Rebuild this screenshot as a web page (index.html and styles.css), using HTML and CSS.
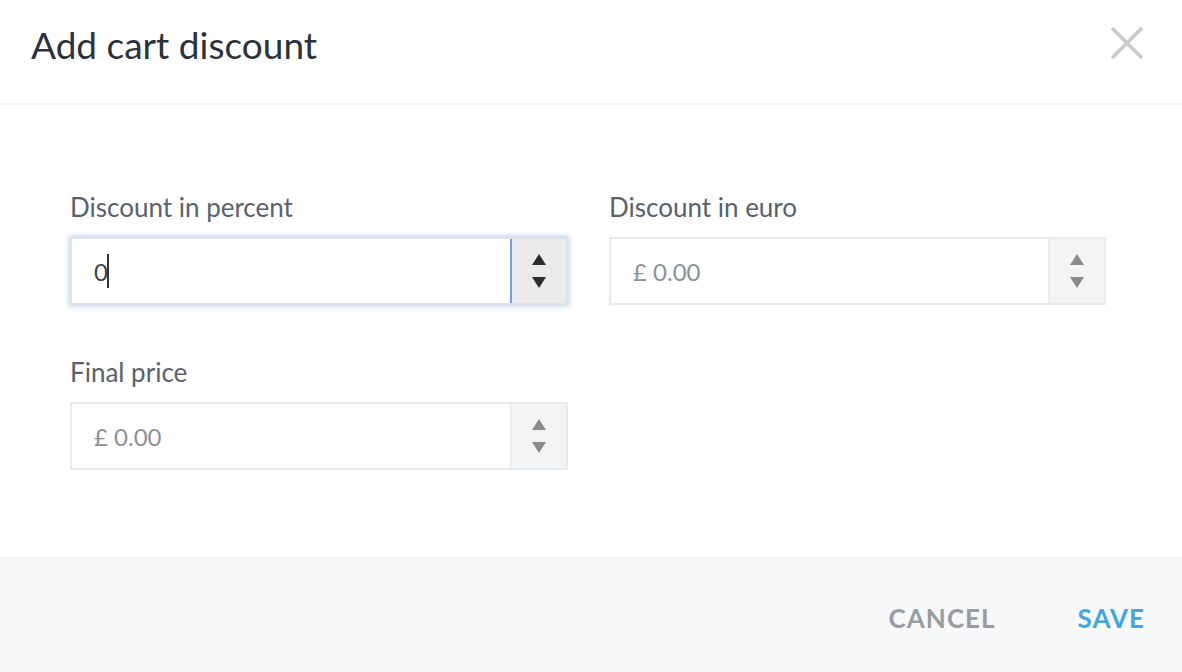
FILE: index.html
```html
<!doctype html>
<html lang="en">
<head>
  <meta charset="utf-8">
  <title>Add cart discount</title>
  <link rel="stylesheet" href="styles.css">
</head>
<body>
<div class="modal">
  <div class="modal-head">
    <h1 class="modal-title">Add cart discount</h1>
    <button class="close-btn" aria-label="Close">
      <svg width="34" height="34" viewBox="0 0 34 34">
        <path d="M2 2 L32 32 M32 2 L2 32" stroke="#c9c9c9" stroke-width="3.4" fill="none"/>
      </svg>
    </button>
  </div>

  <div class="modal-body">
    <div class="field">
      <label class="field-label">Discount in percent</label>
      <div class="num-input focused">
        <div class="num-value"><span class="typed">0</span><span class="caret"></span></div>
        <div class="spin">
          <span class="tri up"></span>
          <span class="tri down"></span>
        </div>
      </div>
    </div>

    <div class="field">
      <label class="field-label">Discount in euro</label>
      <div class="num-input">
        <div class="num-value placeholder">£ 0.00</div>
        <div class="spin">
          <span class="tri up"></span>
          <span class="tri down"></span>
        </div>
      </div>
    </div>

    <div class="field">
      <label class="field-label">Final price</label>
      <div class="num-input">
        <div class="num-value placeholder">£ 0.00</div>
        <div class="spin">
          <span class="tri up"></span>
          <span class="tri down"></span>
        </div>
      </div>
    </div>
  </div>

  <div class="modal-foot">
    <button class="foot-btn cancel">CANCEL</button>
    <button class="foot-btn save">SAVE</button>
  </div>
</div>
</body>
</html>
```

FILE: styles.css
```css
body {
  margin: 0;
  background-color: #fff;
  font-family: Lato, "Open Sans", sans-serif;
  color: #2f3640;
}

.modal {
  width: 1182px;
  height: 672px;
  display: flex;
  flex-direction: column;
}

.modal-head {
  height: 103px;
  border-bottom: 2px solid #eef0f2;
  display: flex;
  align-items: center;
  justify-content: space-between;
  padding: 0 38px 0 31px;
}

.modal-title {
  margin: 0;
  margin-top: -14px;
  font-size: 37px;
  font-weight: 400;
  color: #2b323b;
}

.close-btn {
  border: 0;
  background: none;
  padding: 0;
  margin-top: -17px;
  display: flex;
}

.modal-body {
  flex: 1;
  display: grid;
  grid-template-columns: 498px 497px;
  column-gap: 41px;
  row-gap: 51px;
  align-content: start;
  padding: 86px 0 0 70px;
}

.field-label {
  display: block;
  font-size: 26px;
  color: #59626b;
  margin-bottom: 14px;
}

.num-input {
  height: 64px;
  border: 2px solid #e8ebed;
  display: flex;
  background-color: #fff;
}

.num-input.focused {
  border-color: #dfe3e6;
  box-shadow: 0 0 5px 1px rgba(120, 170, 235, 0.55);
}

.num-value {
  flex: 1;
  display: flex;
  align-items: center;
  padding-left: 22px;
  font-size: 24px;
  color: #3b424a;
}

.num-value.placeholder {
  color: #8d9196;
}

.caret {
  display: inline-block;
  width: 2px;
  height: 34px;
  background-color: #333;
  margin-left: -1px;
}

.spin {
  width: 54px;
  background-color: #f3f4f5;
  border-left: 2px solid #eaecee;
  display: flex;
  flex-direction: column;
  align-items: center;
  justify-content: center;
  gap: 12px;
}

.focused .spin {
  background-color: #ebebeb;
  border-left-color: #6fa3dc;
}

.tri {
  width: 0;
  height: 0;
  border-left: 7px solid transparent;
  border-right: 7px solid transparent;
}

.tri.up { border-bottom: 11px solid #8b8b8b; }
.tri.down { border-top: 11px solid #8b8b8b; }
.focused .tri.up { border-bottom-color: #2d2d2d; }
.focused .tri.down { border-top-color: #2d2d2d; }

.modal-foot {
  height: 115px;
  border-top: 2px solid #eff1f3;
  background-color: #f7f8fa;
  display: flex;
  align-items: center;
  justify-content: flex-end;
  padding-right: 37px;
  padding-top: 4px;
  box-sizing: border-box;
  gap: 82px;
}

.foot-btn {
  border: 0;
  background: none;
  padding: 0;
  font-family: Lato, "Open Sans", sans-serif;
  font-size: 26px;
  font-weight: 700;
  letter-spacing: 1px;
}

.cancel { color: #9a9ca1; }
.save { color: #45a6dc; }
```
